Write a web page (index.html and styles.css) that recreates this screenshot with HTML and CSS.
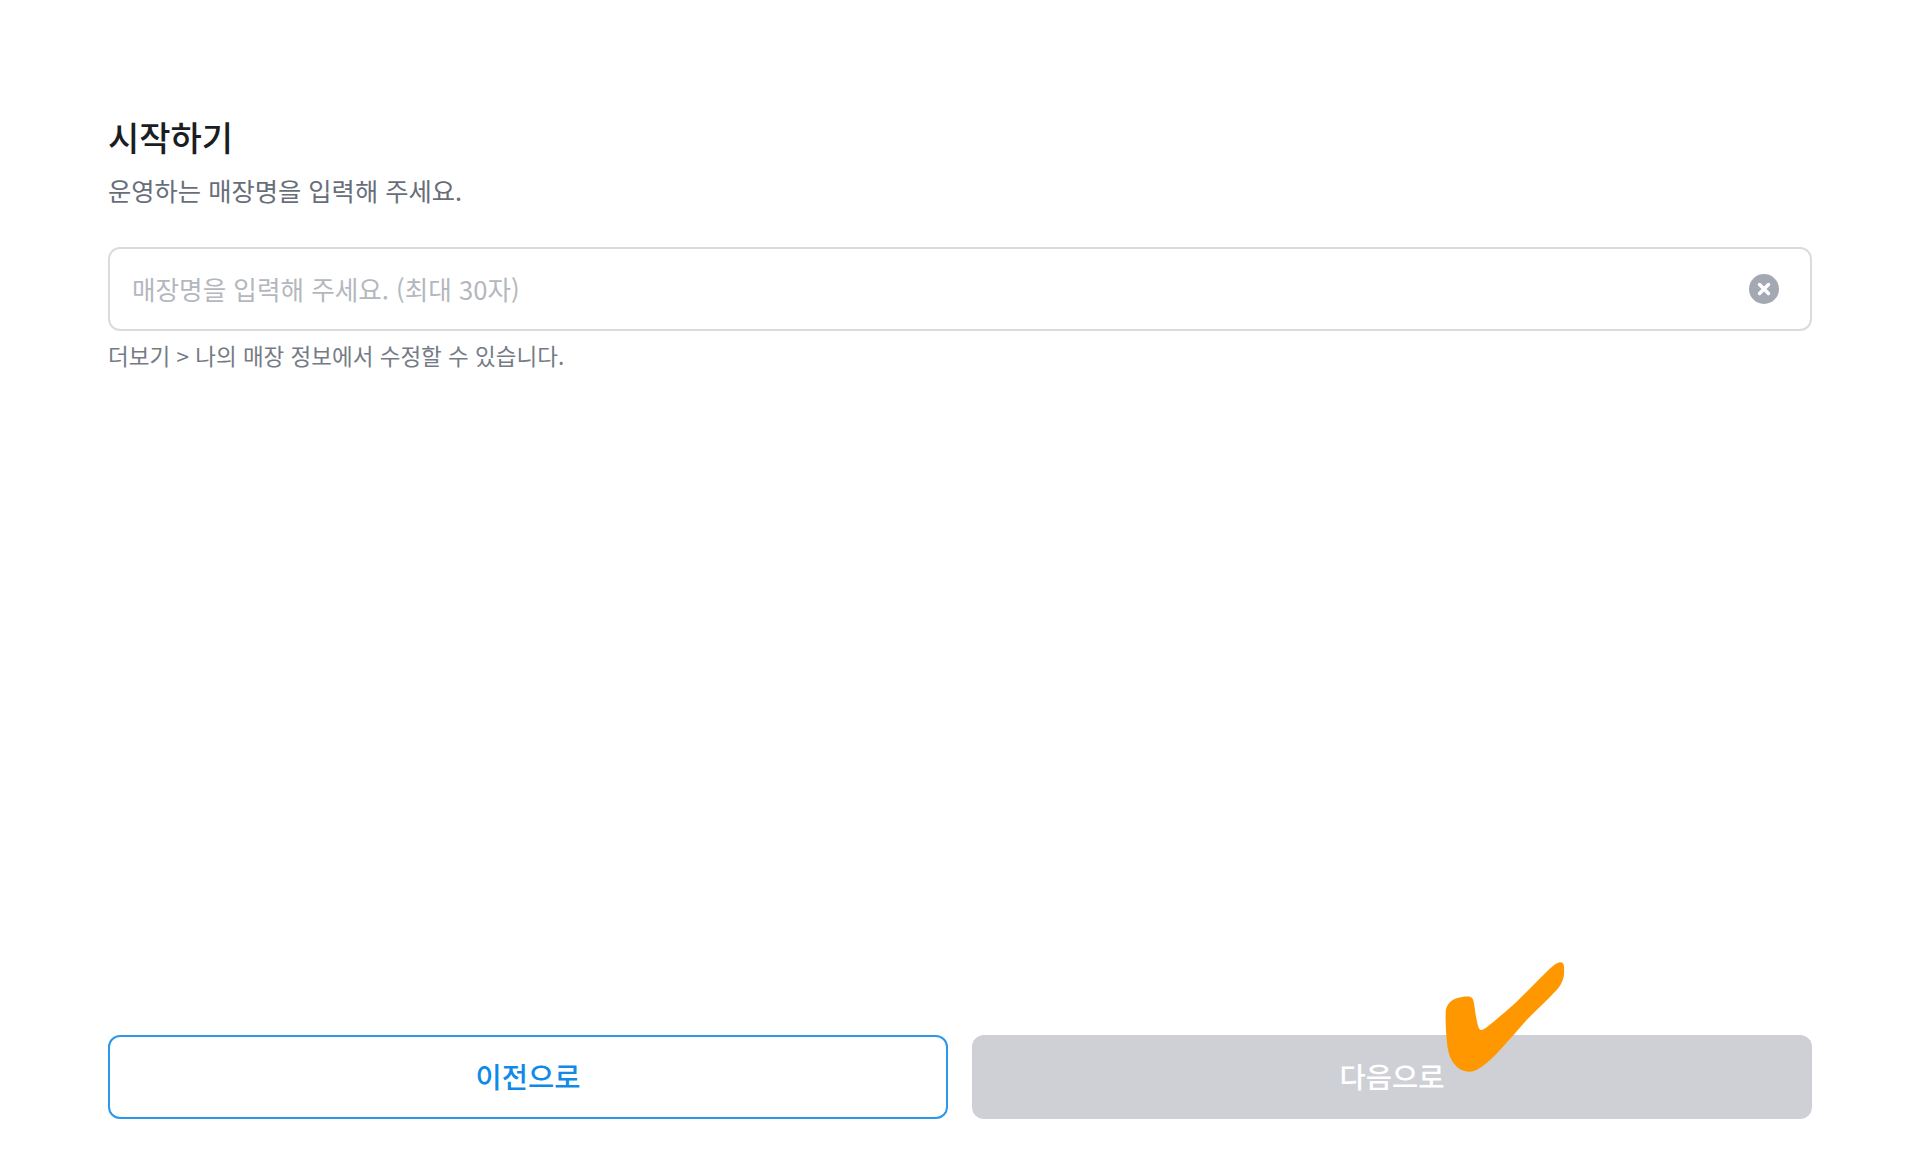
FILE: index.html
```html
<!DOCTYPE html>
<html lang="ko">
<head>
    <meta charset="UTF-8">
    <meta name="viewport" content="width=device-width, initial-scale=1.0">
    <title>시작하기</title>
    <link rel="stylesheet" href="styles.css">
</head>
<body>

    <div class="page">
        <div class="top">
            <h2 class="title">시작하기</h2>
            <p class="desc">운영하는 매장명을 입력해 주세요.</p>
            <div class="field">
                <input class="field-input" type="text" placeholder="매장명을 입력해 주세요. (최대 30자)">
                <svg class="clear" width="30" height="30" viewBox="0 0 30 30">
                    <circle cx="15" cy="15" r="15" fill="#a3a8b3"/>
                    <path d="M10.5 10.5 19.5 19.5M19.5 10.5 10.5 19.5" stroke="#fff" stroke-width="3.5" stroke-linecap="round"/>
                </svg>
            </div>
            <p class="hint">더보기 &gt; 나의 매장 정보에서 수정할 수 있습니다.</p>
        </div>

        <div class="actions">
            <button class="btn btn-prev">이전으로</button>
            <div class="next-wrap">
                <button class="btn btn-next">다음으로</button>
                <svg class="check" width="130" height="115" viewBox="0 0 130 115">
                    <path fill="#ff9800" d="M1.7 52.7C2 46 7 41 12.7 39.3C18 37.5 23 37 26 37.7C29 39 29.5 41 30 44.3C31 50 31.5 56 32.7 61C33.5 66 35 71 37 71C39 71 41 69.5 42.7 68.3C53 60 63 51.5 72.7 42.7C83 33 93 22 102.7 12.7C107 8.5 110.5 5 114.3 3.7C117.5 2.7 120 4 120 7.7C120.3 12 120.3 16 119.3 19.3C118 24 116 27.5 112.7 31C103 42 92.5 50.5 82.7 61C74 70.5 65 81.5 56 91C50 97.5 44 103.5 37.7 107.7C33.5 110.5 30 112.7 26 112.7C21 112.7 16.5 111 12.7 107.7C10 105 7.5 101.5 6 97.7C4 92.5 3.3 87 2.7 81C1.8 71.5 1.4 62 1.7 52.7Z"/>
                </svg>
            </div>
        </div>
    </div>

</body>
</html>
```

FILE: styles.css
```css
* {
    box-sizing: border-box;
}
body {
    margin: 0;
    background-color: #fff;
    font-family: "Noto Sans CJK KR", "Noto Sans", sans-serif;
}
.page {
    display: flex;
    flex-direction: column;
    justify-content: space-between;
    height: 100vh;
    padding: 114px 108px 48px;
}
.title {
    margin: 0;
    font-size: 34px;
    line-height: 46px;
    font-weight: 500;
    color: #1b1d22;
}
.desc {
    margin: 12px 0 0;
    font-size: 25.3px;
    line-height: 36px;
    color: #686e79;
}
.field {
    position: relative;
    margin-top: 39px;
}
.field-input {
    display: block;
    width: 100%;
    height: 84px;
    padding: 0 70px 2px 22px;
    border: 2px solid #dadbde;
    border-radius: 12px;
    outline: none;
    font-family: inherit;
    font-size: 25.6px;
}
.field-input::placeholder {
    color: #b4b7bd;
    opacity: 1;
}
.clear {
    position: absolute;
    top: 27px;
    right: 33px;
}
.hint {
    margin: 7px 0 0;
    font-size: 22.5px;
    line-height: 34px;
    color: #757b86;
}
.actions {
    display: grid;
    grid-template-columns: 1fr 1fr;
    gap: 24px;
}
.next-wrap {
    position: relative;
}
.btn {
    display: block;
    width: 100%;
    height: 84px;
    padding: 0 0 3px;
    border-radius: 12px;
    font-family: inherit;
    font-size: 28.5px;
    font-weight: 500;
    cursor: pointer;
}
.btn-prev {
    border: 2px solid #2c98ea;
    background-color: #fff;
    color: #0f8ae8;
}
.btn-next {
    border: 0;
    background-color: #ced0d5;
    color: #fff;
}
.check {
    position: absolute;
    left: 472px;
    top: -76px;
}
```
